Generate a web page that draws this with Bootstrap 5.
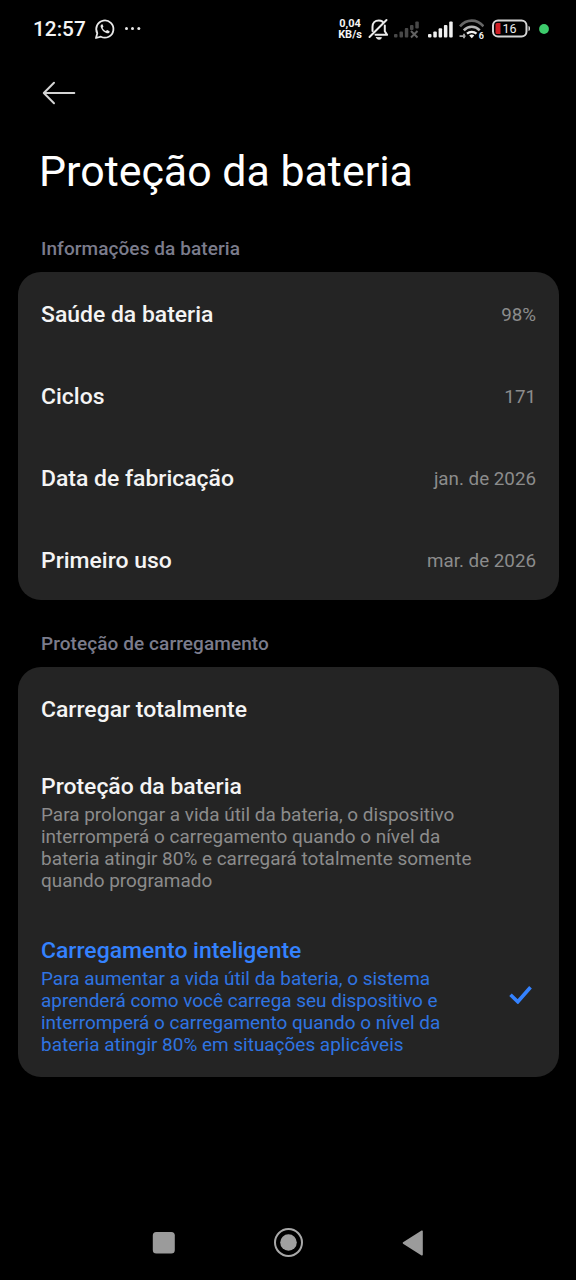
<!DOCTYPE html>
<html lang="pt-BR" data-bs-theme="dark">
<head>
<meta charset="utf-8">
<meta name="viewport" content="width=device-width, initial-scale=1">
<title>Proteção da bateria</title>
<link href="https://cdn.jsdelivr.net/npm/bootstrap@5.3.0/dist/css/bootstrap.min.css" rel="stylesheet">
<style>
  body { background: #000; color: #f4f4f4; font-family: Roboto, "Liberation Sans", sans-serif; }
  .screen { height: 1280px; overflow: hidden; }
  .status-bar { height: 58px; padding: 0 27px 0 33px; }
  .clock { font-size: 20.8px; font-weight: 500; line-height: 24px; width: 53px; }
  .net-speed { font-size: 11px; font-weight: 700; line-height: 11px; width: 24px; white-space: nowrap; }
  .app-bar { height: 70px; padding-left: 42px; }
  .page-title { font-size: 42.9px; font-weight: 400; line-height: 50px; margin: 18px 0 0 39px; }
  .section-label { font-size: 19px; font-weight: 500; line-height: 24px; letter-spacing: .08px; color: #7b7c8c; margin-left: 41px; }
  .label-first { margin-top: 41px; margin-bottom: 11px; }
  .label-second { margin-top: 32px; margin-bottom: 11px; }
  .panel { background: #242424; border-radius: 23px; margin: 0 17.5px 0 18px; }
  .item { padding: 0 22.5px 0 23px; }
  .item-line { height: 82px; padding-top: 2px; }
  .item-tall { height: 164px; padding-top: 2px; }
  .item-title { font-size: 22.95px; font-weight: 500; line-height: 27px; white-space: nowrap; }
  .item-value { font-size: 18.8px; line-height: 24px; padding-top: 1px; color: #8c8c8c; white-space: nowrap; }
  .item-desc { font-size: 18.95px; line-height: 22px; margin-top: 4px; color: #8c8c8c; white-space: nowrap; }
  .chosen { color: #3482ff; }
  .chosen .item-desc { color: #2f74e2; }
  .nav-keys { height: 75px; padding: 0 152px; }
</style>
</head>
<body>
<div class="screen d-flex flex-column">
  <header class="status-bar d-flex align-items-center flex-shrink-0">
    <span class="clock">12:57</span>
    <svg class="ms-2" width="22" height="22" viewBox="0 0 22 22" fill="none" stroke="#e8e8e8" stroke-width="1.8">
      <path d="M2 20l1.3-4.8A8.6 8.6 0 1 1 6.9 18.7z" stroke-linejoin="round"/>
      <path d="M7.900 6.200c-.9.3-1.600 1.500-1.200 2.800.9 3 3.200 5.300 6.200 6.200 1.400.4 2.500-.3 2.700-1.300.1-.7 0-.8-2.400-1.900-.8.3-1 1.200-1.500 1-1.300-.5-2.500-1.600-3.100-2.900-.2-.5.7-.9.8-1.600-.7-2.100-.9-2.400-1.500-2.300z" fill="#e8e8e8" stroke="none"/>
    </svg>
    <svg class="ms-2" width="18" height="6" viewBox="0 0 18 6" fill="#e8e8e8"><circle cx="2.500" cy="2.500" r="1.500"/><circle cx="8.500" cy="2.500" r="1.500"/><circle cx="14.800" cy="2.500" r="1.500"/></svg>

    <div class="d-flex align-items-center ms-auto">
      <div class="net-speed text-center"><div>0,04</div><div>KB/s</div></div>
      <svg class="ms-1" width="24" height="24" viewBox="0 0 24 24" fill="none" stroke="#ececec" stroke-width="2" stroke-linecap="round" stroke-linejoin="round">
        <path d="M3.500 20L20.500 3M6.500 14V9.800c0-3.800 2.500-6.300 6.300-6.300 1.500 0 2.700.4 3.700 1.100M18.800 8.500v5.700l2.300 3.600H9.500"/>
        <path d="M10.500 20.700h5c-.6 2-4.400 2-5 0z" fill="#ececec" stroke-width="1"/>
      </svg>
      <svg width="26" height="20" viewBox="0 0 26 20" class="ms-1" fill="#484848">
        <rect x="0" y="15" width="3.500" height="3.500" rx="1"/><rect x="5.500" y="12.500" width="3.500" height="6" rx="1"/><rect x="10.800" y="9" width="3.500" height="9.500" rx="1"/><rect x="16" y="6" width="3.500" height="5" rx="1"/><rect x="21.300" y="2.500" width="3.500" height="7" rx="1"/>
        <path d="M17 12l6.500 6.500M23.500 12L17 18.500" stroke="#626262" stroke-width="2"/>
      </svg>
      <svg width="26" height="20" viewBox="0 0 26 20" class="ms-2" fill="#f0f0f0">
        <rect x="0" y="15" width="3.500" height="3.500" rx="1"/><rect x="5.300" y="12.500" width="3.500" height="6" rx="1"/><rect x="10.600" y="9.300" width="3.500" height="9.200" rx="1"/><rect x="15.900" y="6" width="3.500" height="12.500" rx="1"/><rect x="21.200" y="2.500" width="3.500" height="16" rx="1"/>
      </svg>
      <svg width="26" height="22" viewBox="0 0 26 22" class="ms-1 me-2" fill="none">
        <path d="M2 8.300C8.500.7 19 .7 25.500 8.300" stroke="#666" stroke-width="2.600"/>
        <path d="M5.800 12.400c4.500-4.800 11.400-4.800 15.900 0" stroke="#b4b4b4" stroke-width="2.600"/>
        <path d="M9 15.600c2.700-2.400 6.800-2.400 9.500 0" stroke="#f0f0f0" stroke-width="2.200"/>
        <path d="M11.200 17.400c1.500-1.200 3.600-1.200 5.100 0l-2.550 2.800z" fill="#f0f0f0"/>
        <path d="M1.500 18.200h6M6 15.700v4.500" stroke="#aaa" stroke-width="1.800"/>
        <text x="20.700" y="20.800" font-family="Roboto, sans-serif" font-size="9" font-weight="700" fill="#f0f0f0">6</text>
      </svg>
      <svg width="39" height="20" viewBox="0 0 39 20">
        <rect x="1" y="1.500" width="33.500" height="16" rx="5" fill="none" stroke="#d5d5d5" stroke-width="2"/>
        <path d="M5 4h3.500v11H5a1.500 1.500 0 0 1-1.500-1.500v-8A1.500 1.500 0 0 1 5 4z" fill="#d01f25"/>
        <path d="M36.500 7c2 .2 2 4.800 0 5z" fill="#d5d5d5"/>
        <text x="17.500" y="14" text-anchor="middle" font-family="Roboto, sans-serif" font-size="12.500" fill="#eee">16</text>
      </svg>
      <svg class="ms-2" width="10" height="11" viewBox="0 0 10 11"><circle cx="5" cy="5" r="4.900" fill="#3dcb6c"/></svg>
    </div>
  </header>

  <div class="app-bar d-flex align-items-center flex-shrink-0">
    <svg width="34" height="24" viewBox="0 0 34 24" fill="none" stroke="#d4d4d4" stroke-width="2" stroke-linecap="round" stroke-linejoin="round"><path d="M32.300 12H2M12 1.700L1.800 12 12 22.300"/></svg>
  </div>
  <h1 class="page-title">Proteção da bateria</h1>

  <h2 class="section-label label-first">Informações da bateria</h2>
  <section class="panel">
    <div class="item item-line d-flex align-items-center justify-content-between"><span class="item-title">Saúde da bateria</span><span class="item-value">98%</span></div>
    <div class="item item-line d-flex align-items-center justify-content-between"><span class="item-title">Ciclos</span><span class="item-value">171</span></div>
    <div class="item item-line d-flex align-items-center justify-content-between"><span class="item-title">Data de fabricação</span><span class="item-value">jan. de 2026</span></div>
    <div class="item item-line d-flex align-items-center justify-content-between"><span class="item-title">Primeiro uso</span><span class="item-value">mar. de 2026</span></div>
  </section>

  <h2 class="section-label label-second">Proteção de carregamento</h2>
  <section class="panel">
    <div class="item item-line d-flex align-items-center"><span class="item-title">Carregar totalmente</span></div>
    <div class="item item-tall d-flex align-items-center">
      <div>
        <div class="item-title">Proteção da bateria</div>
        <div class="item-desc">Para prolongar a vida útil da bateria, o dispositivo<br>interromperá o carregamento quando o nível da<br>bateria atingir 80% e carregará totalmente somente<br>quando programado</div>
      </div>
    </div>
    <div class="item item-tall chosen d-flex align-items-center justify-content-between">
      <div>
        <div class="item-title">Carregamento inteligente</div>
        <div class="item-desc">Para aumentar a vida útil da bateria, o sistema<br>aprenderá como você carrega seu dispositivo e<br>interromperá o carregamento quando o nível da<br>bateria atingir 80% em situações aplicáveis</div>
      </div>
      <svg class="me-1 mb-1" width="23" height="20" viewBox="0 0 23 20" fill="none" stroke="#3482ff" stroke-width="3.600"><path d="M1.500 10.800l7.300 7L21.500 3.200"/></svg>
    </div>
  </section>

  <nav class="nav-keys d-flex align-items-center justify-content-between mt-auto">
    <svg width="23" height="22" viewBox="0 0 23 22"><rect x=".8" y="0" width="22" height="21.500" rx="3.500" fill="#9b9b9b"/></svg>
    <svg width="30" height="30" viewBox="0 0 30 30"><circle cx="14.500" cy="14.500" r="13.500" fill="none" stroke="#a8a8a8" stroke-width="2"/><circle cx="14.500" cy="14.500" r="8.300" fill="#a0a0a0"/></svg>
    <svg width="22" height="26" viewBox="0 0 22 26"><path d="M20 1.300v23.400L1.500 13z" fill="#9b9b9b" stroke="#9b9b9b" stroke-width="1.600" stroke-linejoin="round"/></svg>
  </nav>
</div>
<script src="https://cdn.jsdelivr.net/npm/bootstrap@5.3.0/dist/js/bootstrap.bundle.min.js"></script>
</body>
</html>
